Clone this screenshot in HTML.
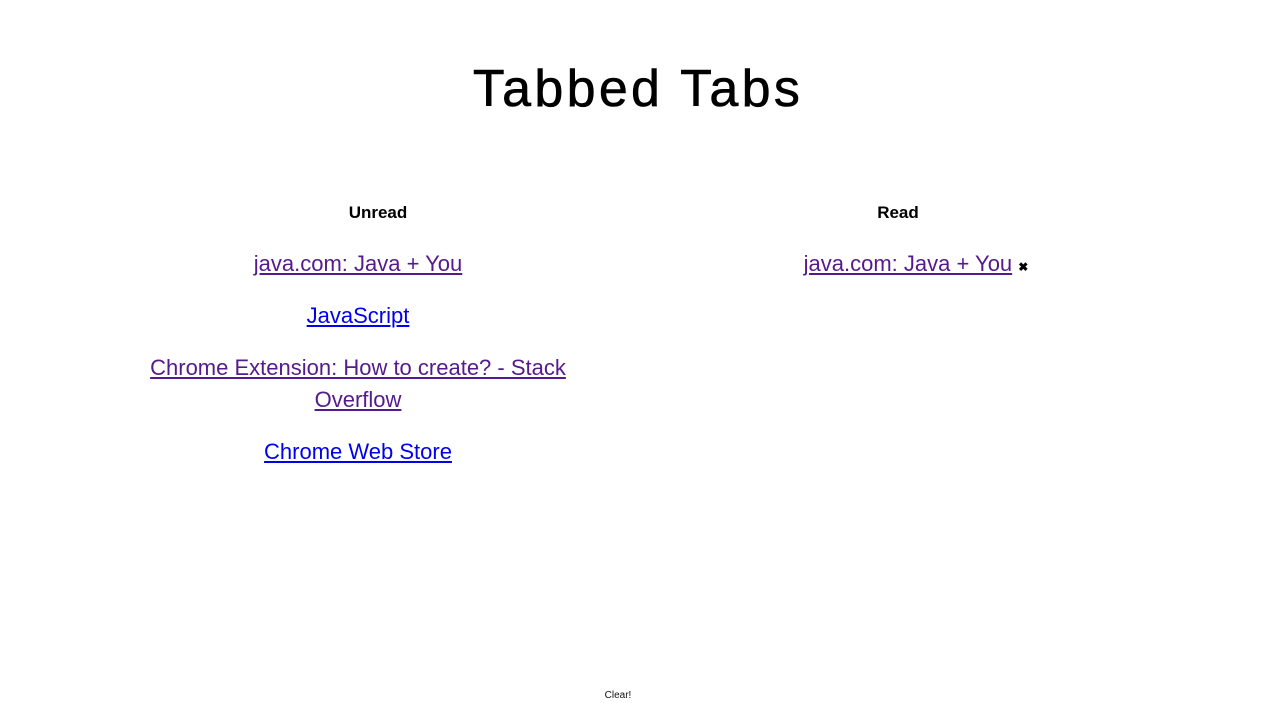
<!DOCTYPE html>
<html><head><style>
body{margin:0;width:1276px;height:703px;background:#fff;position:relative;font-family:"Liberation Sans",sans-serif;overflow:hidden}
h1{position:absolute;top:58px;left:0;width:1276px;margin:0;text-align:center;font-weight:normal;font-size:52px;letter-spacing:3.3px;line-height:62px;color:#000;-webkit-text-stroke:0.6px #000}
.h{position:absolute;top:203px;font-weight:bold;font-size:17px;width:200px;text-align:center}
.col{position:absolute;top:248px;text-align:center;font-size:22px;line-height:32px}
.col div{margin-bottom:20px}
a{text-decoration:underline}
.v{color:#551a8b}.b{color:#0000ee}
.x{font-size:12px;color:#000;font-weight:bold;text-decoration:none}
.clear{position:absolute;top:690px;left:0;width:1236px;text-align:center;font-size:10px;color:#111}
</style></head><body>
<h1>Tabbed Tabs</h1>
<div class="h" style="left:278px">Unread</div>
<div class="h" style="left:798px">Read</div>
<div class="col" style="left:134px;width:448px">
<div><a class="v">java.com: Java + You</a></div>
<div><a class="b">JavaScript</a></div>
<div><a class="v">Chrome Extension: How to create? - Stack Overflow</a></div>
<div><a class="b">Chrome Web Store</a></div>
</div>
<div class="col" style="left:706px;width:420px">
<div><a class="v">java.com: Java + You</a> <span class="x">✖</span></div>
</div>
<div class="clear">Clear!</div>
</body></html>
